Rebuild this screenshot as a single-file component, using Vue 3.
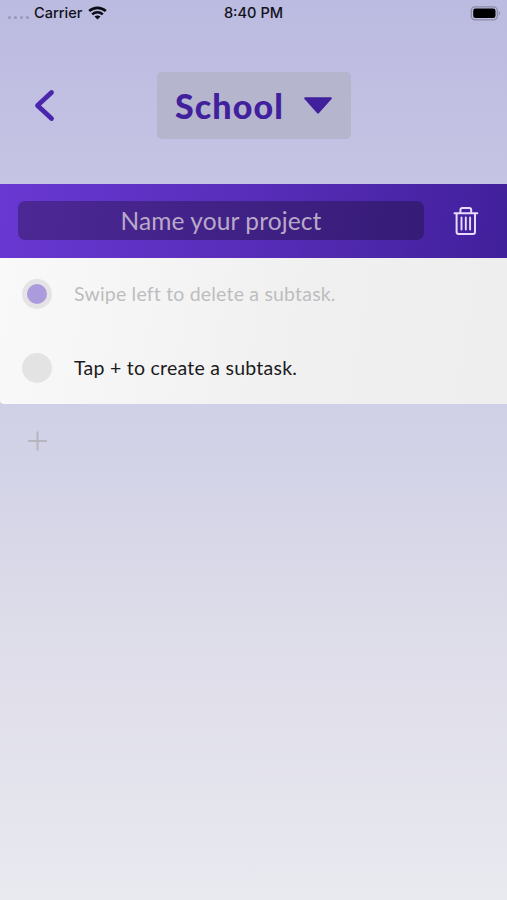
<script setup>
import { ref } from 'vue'

const category = ref('School')
const projectName = ref('')
const subtasks = ref([
  { id: 1, text: 'Swipe left to delete a subtask.', done: true },
  { id: 2, text: 'Tap + to create a subtask.', done: false },
])
</script>

<template>
  <main class="screen">
    <div class="status">
      <div class="carrier">
        <span class="dots"><i v-for="n in 4" :key="n"></i></span>
        <span class="carrier-name">Carrier</span>
        <svg class="wifi" width="19" height="14" viewBox="0 0 19 14" fill="none" stroke="#0b0b12">
          <path d="M1.200 5.100C6 .7 13 .7 17.800 5.100" stroke-width="2.700" />
          <path d="M4.200 8.300c3-2.800 7.600-2.800 10.600 0" stroke-width="2.500" />
          <path d="M6.500 10.600c1.800-1.600 4.200-1.600 6 0L9.500 13.600z" fill="#0b0b12" stroke="none" />
        </svg>
      </div>
      <span class="time">8:40 PM</span>
      <svg class="battery" width="31" height="15" viewBox="0 0 31 15">
        <rect x="1.300" y=".8" width="26" height="13" rx="3.800" fill="none" stroke="#8c8ba6" stroke-width="1.300" />
        <rect x="3.200" y="2.500" width="22.300" height="9.600" rx="2.300" fill="#000" />
        <path d="M28.800 5.300c1.700.7 1.700 3.500 0 4.200z" fill="#8c8ba6" />
      </svg>
    </div>

    <header class="header">
      <svg class="back" width="22" height="34" viewBox="0 0 22 34">
        <path d="M18.500 4.500 4.500 17.500l14 13" fill="none" stroke="#4a26ad" stroke-width="4.800" stroke-linecap="round" stroke-linejoin="round" />
      </svg>
      <div class="category">
        <span class="category-name">{{ category }}</span>
        <svg width="30" height="20" viewBox="0 0 30 20">
          <path d="M2.300 2.300h25.400L15 16.500z" fill="#40209c" stroke="#40209c" stroke-width="2.200" stroke-linejoin="round" />
        </svg>
      </div>
    </header>

    <section class="project">
      <div class="name-field"><span class="placeholder">{{ projectName || 'Name your project' }}</span></div>
      <svg class="trash" width="26" height="30" viewBox="0 0 26 30" fill="none" stroke="#e9dcfb" stroke-width="2" stroke-linecap="round" stroke-linejoin="round">
        <path d="M1.500 7.200h22.800M7.400 6.500V4q0-2 2-2h6.800q2 0 2 2v2.500M3.600 7.500V26q0 2 2 2h14.400q2 0 2-2V7.500" />
        <path d="M8.500 11.500v12M12.800 11.500v12M17.100 11.500v12" stroke-width="1.900" />
      </svg>
    </section>

    <ul class="subtasks">
      <li v-for="task in subtasks" :key="task.id" :class="{ done: task.done }">
        <span class="check"></span>
        <span class="label">{{ task.text }}</span>
      </li>
    </ul>

    <div class="add">
      <svg width="20" height="20" viewBox="0 0 20 20" stroke="#b5b5bd" stroke-width="2">
        <path d="M9.500 .5v19M0 10h19" />
      </svg>
    </div>
  </main>
</template>

<style>
body {
  margin: 0;
}
</style>

<style scoped>
.screen {
  height: 900px;
  overflow: hidden;
  background: linear-gradient(#bbbae0 0%, #c6c4e4 20.500%, #d0d0e7 46%, #dddce9 69%, #e9e9f0 100%);
  font-family: Lato, "Open Sans", sans-serif;
}

.status {
  display: grid;
  grid-template-columns: 1fr auto 1fr;
  align-items: center;
  height: 26px;
  padding: 0 6px 0 8px;
  box-sizing: border-box;
  color: #11111b;
  font: 500 14.600px/26px Inter, sans-serif;
}

.time {
  margin-left: -2px;
}

.carrier {
  display: flex;
  align-items: center;
}

.dots {
  display: flex;
  gap: 2.600px;
  padding-top: 9px;
  margin-right: 5px;
}

.dots i {
  width: 3.300px;
  height: 3.300px;
  border-radius: 50%;
  background: #9998b6;
}

.wifi {
  margin-left: 5px;
}

.battery {
  justify-self: end;
}

.header {
  display: grid;
  grid-template-columns: 157px 194px;
  align-items: center;
  height: 158px;
}

.back {
  margin-left: 33px;
}

.category {
  display: flex;
  align-items: center;
  justify-content: space-between;
  box-sizing: border-box;
  height: 67px;
  padding: 2px 18px 0 18px;
  border-radius: 5px;
  background: #b5b5cd;
}

.category-name {
  color: #40209c;
  font-size: 34px;
  font-weight: 900;
  letter-spacing: 1.100px;
  line-height: 44px;
}

.project {
  display: flex;
  align-items: center;
  gap: 29px;
  box-sizing: border-box;
  height: 74px;
  padding: 0 0 1px 18px;
  background: linear-gradient(100deg, #6938d3, #572db9 50%, #41209b);
}

.name-field {
  display: flex;
  align-items: center;
  justify-content: center;
  width: 406px;
  height: 39px;
  border-radius: 7px;
  background: linear-gradient(100deg, #4c2895, #361b77);
}

.placeholder {
  color: #b9a9c9;
  font-size: 24.500px;
  letter-spacing: 0.100px;
  line-height: 34px;
}

.subtasks {
  margin: 0;
  padding: 0;
  list-style: none;
  background: linear-gradient(100deg, #f9f9f9, #f0f0f0 60%, #eeeeee);
  border-bottom-left-radius: 4px;
}

.subtasks li {
  display: flex;
  align-items: center;
  height: 73px;
  padding-left: 22px;
}

.check {
  width: 30px;
  height: 30px;
  margin-right: 22px;
  border-radius: 50%;
  background: #e3e3e3;
}

.done .check {
  box-sizing: border-box;
  border: 5px solid #e5e3e5;
  background: #ab9bdc;
}

.label {
  color: #1b1b1d;
  font-size: 19.500px;
  letter-spacing: 0.250px;
  line-height: 28px;
}

.done .label {
  color: #bdbdbf;
  letter-spacing: 0.190px;
}

.subtasks .done {
  box-sizing: border-box;
  padding-bottom: 1px;
}

.add {
  display: flex;
  align-items: center;
  height: 73px;
  padding-left: 28px;
}
</style>
